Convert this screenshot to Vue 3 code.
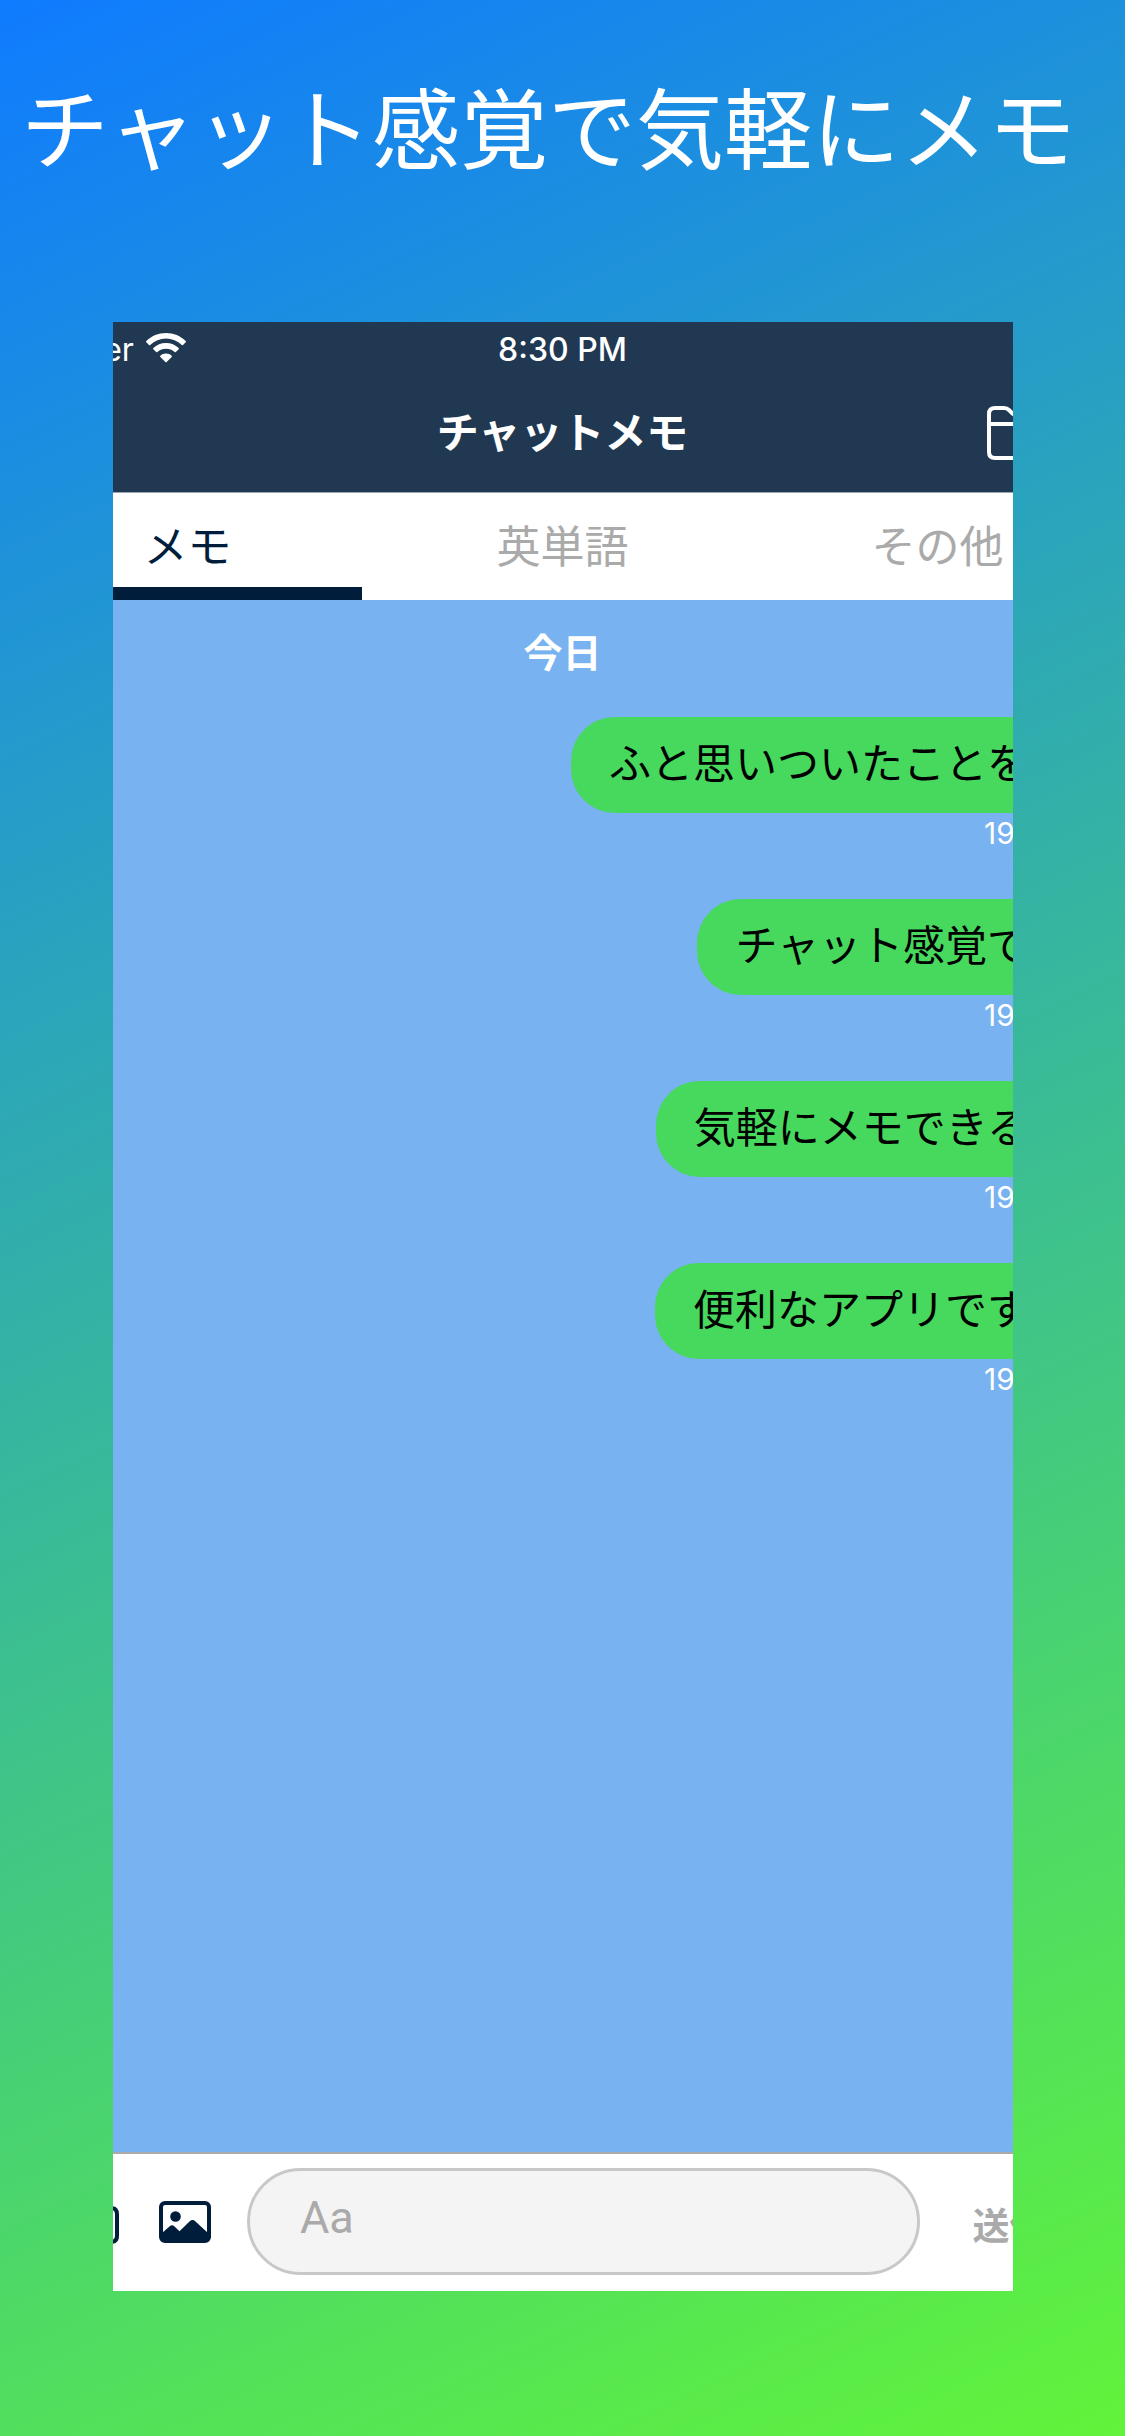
<script setup>
import { ref } from 'vue'

const tabs = ['メモ', '英単語', 'その他']
const active = ref(0)
const draft = ref('')
const messages = [
  { text: 'ふと思いついたことを', time: '19:30' },
  { text: 'チャット感覚で', time: '19:30' },
  { text: '気軽にメモできる', time: '19:30' },
  { text: '便利なアプリです', time: '19:30' },
]
</script>

<template>
  <main class="poster">
    <h1 class="headline">チャット感覚で気軽にメモ</h1>
    <section class="frame">
      <div class="screen">
        <header class="top">
          <div class="status">
            <div class="carrier">
              <span>Carrier</span>
              <svg class="wifi" viewBox="0 0 40 30" aria-hidden="true">
                <path d="M20 0C12.400 0 5.300 2.900 0.300 8.100Q-0.200 8.700 0.300 9.300L3 12Q3.500 12.500 4.200 11.900A23 23 0 0 1 35.800 11.900Q36.500 12.500 37 12L39.700 9.300Q40.200 8.700 39.700 8.100C34.700 2.900 27.600 0 20 0Z" />
                <path d="M20 10C15 10 10.600 11.900 7.300 15.100Q6.800 15.700 7.300 16.200L10.200 19.100Q10.700 19.600 11.400 19A13 13 0 0 1 28.600 19Q29.300 19.600 29.800 19.100L32.700 16.200Q33.200 15.700 32.700 15.100C29.400 11.900 25 10 20 10Z" />
                <path d="M20 20.500C17.700 20.500 15.800 21.300 14.300 22.700Q13.800 23.300 14.300 23.900L19.400 29.100Q20 29.700 20.600 29.100L25.700 23.900Q26.200 23.300 25.700 22.700C24.200 21.300 22.300 20.500 20 20.500Z" />
              </svg>
            </div>
            <time class="clock">8:30 PM</time>
            <span></span>
          </div>
          <div class="nav">
            <span></span>
            <h2 class="title">チャットメモ</h2>
            <button class="folder" aria-label="フォルダ">
              <svg viewBox="0 0 66 54" aria-hidden="true">
                <path d="M2 46V8Q2 2 8 2H17Q20 2 22 4L25 7Q27 9 30 9H58Q64 9 64 15V46Q64 52 58 52H8Q2 52 2 46ZM2 18H64" />
              </svg>
            </button>
          </div>
        </header>
        <nav class="tabs">
          <button
            v-for="(tab, i) in tabs"
            :key="tab"
            class="tab"
            :class="{ on: i === active }"
            @click="active = i"
          >{{ tab }}</button>
        </nav>
        <div class="chat">
          <p class="day">今日</p>
          <ul class="list">
            <li v-for="m in messages" :key="m.text" class="message">
              <p class="bubble">{{ m.text }}</p>
              <time class="stamp">{{ m.time }}</time>
            </li>
          </ul>
        </div>
        <form class="composer" @submit.prevent>
          <button type="button" class="icon camera" aria-label="カメラ">
            <svg viewBox="0 0 52 44" aria-hidden="true">
              <path d="M8 8H14L18 2H34L38 8H44Q50 8 50 14V36Q50 42 44 42H8Q2 42 2 36V14Q2 8 8 8Z" />
              <circle cx="26" cy="24" r="10" />
            </svg>
          </button>
          <button type="button" class="icon photo" aria-label="写真">
            <svg viewBox="0 0 52 42" aria-hidden="true">
              <rect x="2" y="2" width="48" height="38" rx="4" />
              <circle class="solid" cx="16.500" cy="15.500" r="5.300" />
              <path class="solid" d="M3 32L11 25Q13.300 23.300 15.500 25.500L20.500 30.200L30.500 20.400Q33.500 17.800 36.500 20.400L49 32V36Q49 39.500 45 39.500H7Q3 39.500 3 36Z" />
            </svg>
          </button>
          <input v-model="draft" class="field" type="text" placeholder="Aa" aria-label="メモを入力" />
          <button class="send">送信</button>
        </form>
      </div>
    </section>
  </main>
</template>

<style>
body {
  margin: 0;
}
</style>

<style scoped>
.poster {
  min-height: 100vh;
  box-sizing: border-box;
  display: flex;
  flex-direction: column;
  align-items: center;
  padding-bottom: 145px;
  overflow: hidden;
  background: linear-gradient(155deg, #0f7bff, #60f43a);
  font-family: Inter, "Noto Sans CJK JP", sans-serif;
}

h1,
h2,
p,
ul {
  margin: 0;
  padding: 0;
}

button {
  border: 0;
  padding: 0;
  background: none;
  color: inherit;
  font-family: inherit;
}

svg {
  display: block;
}

.headline {
  align-self: flex-start;
  padding: 66px 21px 128px;
  color: #fff;
  font-size: 88px;
  line-height: 128px;
  font-weight: 400;
  white-space: nowrap;
}

.frame {
  flex: 1;
  display: flex;
  justify-content: center;
  width: 80%;
  overflow: hidden;
}

.screen {
  flex: none;
  display: flex;
  flex-direction: column;
  width: 125%;
}

.top {
  background: #203851;
  color: #fff;
  border-bottom: 1px solid #9ba5b0;
}

.status {
  display: grid;
  grid-template-columns: 1fr auto 1fr;
  align-items: center;
  height: 54px;
}

.carrier {
  display: flex;
  align-items: center;
  gap: 12px;
  padding-left: 29px;
  font-size: 32px;
}

.wifi {
  width: 40px;
  height: 30px;
  margin-bottom: 2px;
  fill: #fff;
}

.clock {
  font-size: 32px;
  font-weight: 500;
}

.nav {
  display: grid;
  grid-template-columns: 1fr auto 1fr;
  align-items: center;
  height: 114px;
  padding-bottom: 2px;
}

.title {
  font-size: 42px;
  line-height: 60px;
  font-weight: 700;
}

.folder {
  justify-self: end;
  margin-right: 72px;
}

.folder svg {
  width: 66px;
  height: 54px;
  fill: none;
  stroke: #fff;
  stroke-width: 4;
}

.tabs {
  display: grid;
  grid-template-columns: repeat(3, 1fr);
  height: 107px;
  background: linear-gradient(#001e3c, #001e3c) left bottom / 362px 13px no-repeat #fff;
}

.tab {
  padding-bottom: 6px;
  color: #aaa;
  font-size: 44px;
  font-weight: 400;
}

.tab.on {
  color: #001e3c;
}

.chat {
  flex: 1;
  padding: 25px 58px 0;
  background: #78b2f0;
}

.day {
  color: #fff;
  font-size: 39px;
  line-height: 56px;
  font-weight: 700;
  text-align: center;
}

.list {
  display: flex;
  flex-direction: column;
  gap: 46px;
  padding-top: 36px;
  list-style: none;
}

.message {
  display: flex;
  flex-direction: column;
  align-items: flex-end;
}

.bubble {
  padding: 17px 38px 19px;
  border-radius: 44px;
  background: #47d85e;
  color: #000;
  font-size: 42px;
  line-height: 60px;
  font-weight: 400;
  white-space: nowrap;
}

.stamp {
  padding-right: 6px;
  color: #fff;
  font-size: 30px;
  line-height: 40px;
}

.composer {
  display: flex;
  align-items: center;
  height: 139px;
  box-sizing: border-box;
  padding-bottom: 2px;
  border-top: 2px solid #aaa;
  background: #fff;
}

.icon svg {
  width: 52px;
  fill: none;
  stroke: #001e3c;
  stroke-width: 4;
}

.icon .solid {
  fill: #001e3c;
  stroke: none;
}

.camera {
  margin-left: 67px;
}

.photo {
  margin-left: 40px;
}

.field {
  flex: 1;
  min-width: 0;
  height: 107px;
  box-sizing: border-box;
  margin-left: 36px;
  padding: 0 50px 8px;
  border: 3px solid #c8c8c8;
  border-radius: 54px;
  background: #f4f4f4;
  font-family: Roboto, "Noto Sans CJK JP", sans-serif;
  font-size: 45px;
}

.field::placeholder {
  color: #aaa;
}

.send {
  width: 205px;
  padding: 4px 26px 0 0;
  color: #aaa;
  font-size: 37px;
  font-weight: 700;
}
</style>
